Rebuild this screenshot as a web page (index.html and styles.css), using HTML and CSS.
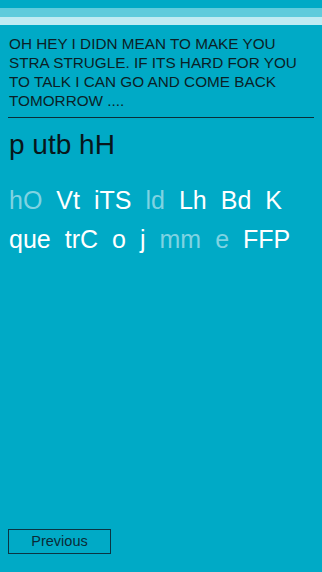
FILE: index.html
```html
<!DOCTYPE html>
<html>
<head>
<meta charset="utf-8">
<link rel="stylesheet" href="styles.css">
</head>
<body>
<div class="screen">
  <div class="bars">
    <div class="bar bar-mid"></div>
    <div class="bar bar-light"></div>
  </div>
  <div class="message">OH HEY I DIDN MEAN TO MAKE YOU STRA STRUGLE. IF ITS HARD FOR YOU TO TALK I CAN GO AND COME BACK TOMORROW ....</div>
  <div class="answer">p utb hH</div>
  <div class="words">
    <span class="word dim">hO</span>
    <span class="word">Vt</span>
    <span class="word">iTS</span>
    <span class="word dim">ld</span>
    <span class="word">Lh</span>
    <span class="word">Bd</span>
    <span class="word">K</span>
    <span class="word">que</span>
    <span class="word">trC</span>
    <span class="word">o</span>
    <span class="word">j</span>
    <span class="word dim">mm</span>
    <span class="word dim">e</span>
    <span class="word">FFP</span>
  </div>
  <div class="footer">
    <button class="prev-btn">Previous</button>
  </div>
</div>
</body>
</html>
```
FILE: styles.css
```css
html, body {
  margin: 0;
  padding: 0;
}
body {
  background: #00aac6;
  font-family: "Liberation Sans", Arial, sans-serif;
}
.screen {
  height: 572px;
  display: flex;
  flex-direction: column;
}
.bars {
  margin-top: 8px;
}
.bar {
  height: 9px;
}
.bar-mid {
  background: #5fcbdc;
}
.bar-light {
  height: 8px;
  background: #c0ebf3;
}
.message {
  margin: 9px 8px 0 8px;
  padding: 0 0 7px 1px;
  border-bottom: 1px solid #0b2e38;
  font-size: 15.3px;
  line-height: 19px;
  color: #0b1f26;
}
.answer {
  margin: 11px 9px 0 9px;
  font-size: 28px;
  line-height: 32px;
  color: #08161b;
}
.words {
  margin: 20px 9px 0 9px;
  display: flex;
  flex-wrap: wrap;
  column-gap: 14px;
  font-size: 25px;
  line-height: 39px;
  color: #ffffff;
}
.word.dim {
  color: #7fd3e2;
}
.footer {
  margin-top: auto;
  padding: 0 0 18px 8px;
}
.prev-btn {
  display: block;
  width: 103px;
  height: 25px;
  padding: 0;
  margin: 0;
  background: transparent;
  border: 1px solid #0b3442;
  color: #0b2a36;
  font-family: "Liberation Sans", Arial, sans-serif;
  font-size: 14.5px;
  line-height: 23px;
  text-align: center;
}
```
